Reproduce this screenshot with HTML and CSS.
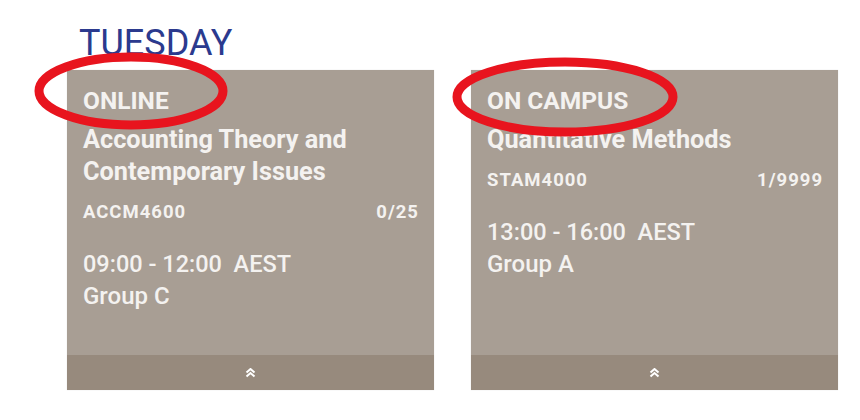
FILE: index.html
```html
<!DOCTYPE html>
<html>
<head>
<meta charset="utf-8">
<link rel="stylesheet" href="styles.css">
</head>
<body>
<div class="page">
  <h1 class="day">TUESDAY</h1>
  <div class="cards">
    <div class="card">
      <div class="card-body">
        <div class="mode">ONLINE</div>
        <div class="title">Accounting Theory and Contemporary Issues</div>
        <div class="meta"><span>ACCM4600</span><span>0/25</span></div>
        <div class="time">09:00 - 12:00&nbsp; AEST</div>
        <div class="group">Group C</div>
      </div>
      <div class="card-foot">
        <svg width="11" height="10" viewBox="0 0 11 10"><path d="M1.5 4.5 L5.5 1 L9.5 4.5 M1.5 8.5 L5.5 5 L9.5 8.5" fill="none" stroke="#fff" stroke-width="2"/></svg>
      </div>
    </div>
    <div class="card">
      <div class="card-body">
        <div class="mode">ON CAMPUS</div>
        <div class="title">Quantitative Methods</div>
        <div class="meta"><span>STAM4000</span><span>1/9999</span></div>
        <div class="time">13:00 - 16:00&nbsp; AEST</div>
        <div class="group">Group A</div>
      </div>
      <div class="card-foot">
        <svg width="11" height="10" viewBox="0 0 11 10"><path d="M1.5 4.5 L5.5 1 L9.5 4.5 M1.5 8.5 L5.5 5 L9.5 8.5" fill="none" stroke="#fff" stroke-width="2"/></svg>
      </div>
    </div>
  </div>
  <svg class="marks" width="860" height="420" viewBox="0 0 860 420">
    <ellipse cx="131" cy="91" rx="92" ry="34" fill="none" stroke="#e8141e" stroke-width="9"/>
    <ellipse cx="565" cy="97" rx="108" ry="35" fill="none" stroke="#e8141e" stroke-width="9"/>
  </svg>
</div>
</body>
</html>
```

FILE: styles.css
```css
html, body {
  margin: 0;
  padding: 0;
  background: #ffffff;
}
.page {
  position: relative;
  width: 860px;
  height: 420px;
  padding-left: 67px;
  box-sizing: border-box;
  font-family: Roboto, "Liberation Sans", sans-serif;
}
.day {
  margin: 0 0 0 12px;
  padding-top: 23px;
  height: 50px;
  box-sizing: border-box;
  font-size: 36px;
  line-height: 40px;
  font-weight: 400;
  color: #2b3a8e;
  letter-spacing: 0;
}
.cards {
  display: flex;
  gap: 37px;
  margin-top: 20px;
}
.card {
  width: 367px;
  height: 320px;
  background: #a89e94;
  display: flex;
  flex-direction: column;
  color: #f4f2f0;
  box-shadow: 0 0 1px rgba(0,0,0,0.15);
}
.card-body {
  flex: 1;
  padding: 15px 15px 0 16px;
}
.mode {
  font-size: 24.5px;
  line-height: 32px;
  font-weight: 700;
}
.title {
  margin-top: 7px;
  font-size: 25.3px;
  line-height: 32px;
  font-weight: 700;
}
.meta {
  margin-top: 12px;
  display: flex;
  justify-content: space-between;
  font-size: 18.5px;
  line-height: 24px;
  font-weight: 700;
  letter-spacing: 1px;
}
.time {
  margin-top: 24px;
  font-size: 23.5px;
  line-height: 32px;
  font-weight: 500;
}
.group {
  font-size: 24px;
  line-height: 32px;
  font-weight: 500;
}
.card-foot {
  height: 35px;
  background: #978a7d;
  display: flex;
  align-items: center;
  justify-content: center;
}
.marks {
  position: absolute;
  left: 0;
  top: 0;
  pointer-events: none;
}
```
